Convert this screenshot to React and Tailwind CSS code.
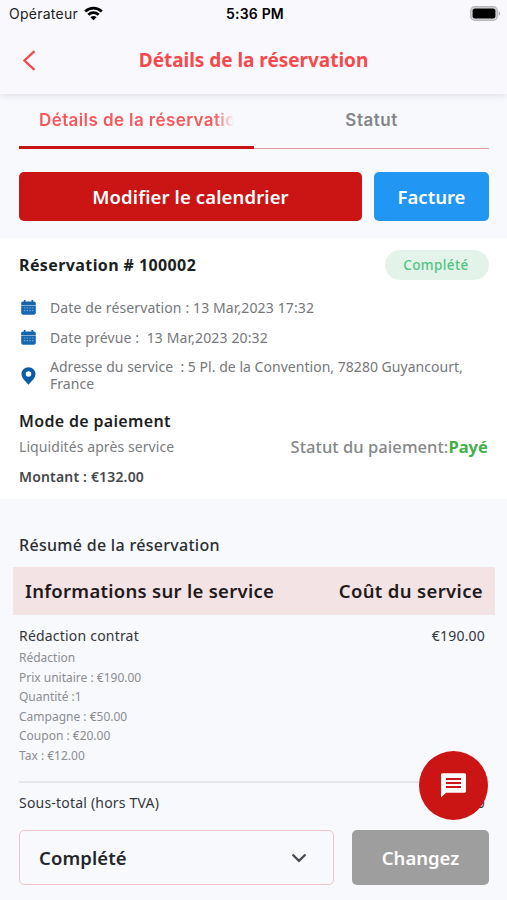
import React from "react";

const details = [
  "Rédaction",
  "Prix unitaire : €190.00",
  "Quantité :1",
  "Campagne : €50.00",
  "Coupon : €20.00",
  "Tax : €12.00",
];

function WifiIcon() {
  return (
    <svg width="19" height="15" viewBox="0 0 19 15" fill="none" stroke="#000" strokeWidth="2.7">
      <path d="M1.2 5.4C6 .9 13 .9 17.8 5.4" />
      <path d="M4.3 8.8c3-2.8 7.400-2.8 10.400 0" />
      <path d="M9.5 14.2 6.4 11.3c1.700-1.600 4.500-1.600 6.200 0z" fill="#000" stroke="none" />
    </svg>
  );
}

function BatteryIcon() {
  return (
    <svg width="31" height="15" viewBox="0 0 31 15">
      <rect x="0.8" y="0.8" width="26.4" height="13.4" rx="3.8" fill="#dcdcde" stroke="#b8b8ba" strokeWidth="1.4" />
      <rect x="2.6" y="2.6" width="22.8" height="9.8" rx="2" fill="#000" />
      <path d="M28.6 5.2c2 .8 2 3.8 0 4.6z" fill="#aaa" />
    </svg>
  );
}

function CalendarIcon() {
  return (
    <svg width="15" height="15" viewBox="0 0 15 15" className="shrink-0">
      <path d="M2 1.4h11c1 0 1.800.8 1.800 1.800v1.700H.2V3.200c0-1 .8-1.800 1.800-1.800z" fill="#1565ab" />
      <path d="M3.700 0v2.400M11.300 0v2.400" stroke="#1565ab" strokeWidth="1.7" />
      <path d="M.2 5.500h14.600v7.300c0 1.100-.8 1.900-1.800 1.900H2c-1 0-1.800-.8-1.800-1.900z" fill="#1767b0" />
      <path d="M2.800 8h9.800M2.800 10.600h9.800" stroke="#6fa5d6" strokeWidth="1.2" strokeDasharray="1.5 1.2" />
    </svg>
  );
}

function PinIcon() {
  return (
    <svg width="15" height="18" viewBox="0 0 15 18" className="mt-[2px] shrink-0">
      <path
        fillRule="evenodd"
        d="M7.5.3C3.500.3.5 3.300.5 7c0 4.200 4.300 7.700 7 10.700 2.700-3 7-6.500 7-10.700C14.500 3.300 11.500.3 7.500.3zM7.500 4.200a2.800 2.800 0 1 1 0 5.600 2.800 2.800 0 0 1 0-5.600z"
        fill="#0a5ba8"
      />
    </svg>
  );
}

function MessageIcon() {
  return (
    <svg width="25" height="25" viewBox="0 0 25 25">
      <path d="M1.500.3h22c.8 0 1.500.7 1.500 1.500v16.400c0 .8-.7 1.500-1.500 1.500H5L0 24.500V1.800C0 1 .7.3 1.500.3z" fill="#fff" />
      <path d="M5 6h15M5 10h15M5 14h15" stroke="#ca1514" strokeWidth="2" />
    </svg>
  );
}

function Header() {
  return (
    <div className="relative h-[94px] bg-[#f9f9fd] shadow-[0_2px_6px_rgba(60,60,80,0.12)]">
      <div className="grid h-7 grid-cols-3 items-center pr-[6px] pl-[9px] font-['Inter','Liberation_Sans',sans-serif] text-[14px] text-[#222]">
        <div className="flex items-center gap-[6px] pb-[2px]">
          <span className="tracking-[0.25px]">Opérateur</span>
          <WifiIcon />
        </div>
        <span className="pb-[1px] text-center font-semibold tracking-[0.2px] text-black">5:36 PM</span>
        <div className="flex justify-end pb-[2px]">
          <BatteryIcon />
        </div>
      </div>
      <div className="grid h-[64px] grid-cols-[60px_1fr_60px] items-center">
        <svg width="13" height="21" viewBox="0 0 13 21" className="ml-[23px]" fill="none" stroke="#f04c50" strokeWidth="2.3">
          <path d="M11.5 1.200 1.500 10.500l10 9.300" />
        </svg>
        <h1 className="text-center text-[19px] font-bold tracking-[-0.03px] text-[#f7484c]">Détails de la réservation</h1>
      </div>
    </div>
  );
}

function Tabs() {
  return (
    <div className="flex h-[55px] pr-[18px] pl-[19px] font-['Inter','Liberation_Sans',sans-serif] text-[17px] leading-6 font-semibold">
      <div className="w-[235px] border-b-[3px] border-[#c81414] px-5 pt-[14px]">
        <div className="overflow-hidden whitespace-nowrap tracking-[0.4px] text-[#f7585b] [mask-image:linear-gradient(to_right,black_90%,transparent)]">
          Détails de la réservation
        </div>
      </div>
      <div className="flex-1 border-b border-[#e29a9d] pt-[14px] text-center tracking-[0.5px] text-[#85858a]">Statut</div>
    </div>
  );
}

function BookingInfo() {
  return (
    <div className="mt-[17px] h-[261px] bg-white pt-3 pr-[18px] pl-[19px]">
      <div className="flex h-[30px] items-center justify-between">
        <h2 className="text-[16px] font-bold tracking-[0.4px] text-[#1c1f22]">Réservation # 100002</h2>
        <span className="flex h-[30px] w-[104px] items-center justify-center rounded-full bg-[#e4f3ea] pr-[2px] text-[13.5px] font-medium tracking-[0.4px] text-[#4fc47f]">
          Complété
        </span>
      </div>
      <div className="mt-3 text-[14px] whitespace-pre text-[#75777a]">
        <div className="flex h-[30px] items-center gap-[14px] pl-[2px]">
          <CalendarIcon />
          <span className="tracking-[0.12px]">Date de réservation : 13 Mar,2023 17:32</span>
        </div>
        <div className="flex h-[31px] items-center gap-[14px] pl-[2px]">
          <CalendarIcon />
          <span className="tracking-[0.13px]">Date prévue :  13 Mar,2023 20:32</span>
        </div>
        <div className="mt-[5px] flex items-center gap-[14px] pl-[2px]">
          <PinIcon />
          <span className="leading-[17px] tracking-[0.03px]">
            {"Adresse du service  : 5 Pl. de la Convention, 78280 Guyancourt,\nFrance"}
          </span>
        </div>
      </div>
      <h2 className="mt-[15px] text-[16px] leading-7 font-semibold tracking-[0.33px] text-[#1c1f22]">Mode de paiement</h2>
      <div className="flex h-6 items-center justify-between">
        <span className="pb-[2px] text-[14px] tracking-[0.08px] text-[#7b7d80]">Liquidités après service</span>
        <span className="pr-[1px] text-[16.5px] font-medium tracking-[0.05px] text-[#858789]">
          Statut du paiement:<span className="font-bold text-[#42b045]">Payé</span>
        </span>
      </div>
      <div className="mt-[6px] text-[14px] leading-6 font-semibold tracking-[0.17px] text-[#45484b]">Montant : €132.00</div>
    </div>
  );
}

function Summary() {
  return (
    <div className="pt-8">
      <h2 className="px-[19px] text-[16px] leading-7 font-medium tracking-[0.3px] text-[#2b2e31]">Résumé de la réservation</h2>
      <div className="mt-2 mr-[12px] ml-[13px] flex h-12 items-center justify-between bg-[#f4e3e5] px-3 text-[18.5px] font-semibold tracking-[0.28px] text-[#1f1a1c]">
        <span>Informations sur le service</span>
        <span className="tracking-[0.35px]">Coût du service</span>
      </div>
      <div className="mt-[11px] flex justify-between pr-[22px] pl-[19px] text-[14px] leading-5 tracking-[0.2px] text-[#333639]">
        <span>Rédaction contrat</span>
        <span>€190.00</span>
      </div>
      <div className="mt-[2px] px-[19px] text-[12px] leading-[19.5px] text-[#8b8d91]">
        {details.map((item) => (
          <div key={item}>{item}</div>
        ))}
      </div>
      <div className="mt-4 mr-[18px] ml-[19px] h-[2px] bg-[#e5e6ea]" />
      <div className="mt-[10px] flex justify-between pr-[22px] pl-[19px] text-[14px] leading-5 tracking-[0.2px] text-[#333639]">
        <span>Sous-total (hors TVA)</span>
        <span>€132.00</span>
      </div>
    </div>
  );
}

function App() {
  return (
    <div className="relative h-[900px] w-[507px] overflow-hidden bg-[#f8f9fd] font-['Noto_Sans','Open_Sans',sans-serif]">
      <Header />
      <Tabs />
      <div className="mt-[23px] flex h-[49px] gap-3 pr-[18px] pl-[19px] text-[18.5px] font-semibold text-white">
        <button className="flex-1 rounded-[5px] bg-[#ca1514] tracking-[0.13px]">Modifier le calendrier</button>
        <button className="w-[115px] rounded-[5px] bg-[#2196f3]">Facture</button>
      </div>
      <BookingInfo />
      <Summary />
      <div className="mt-[17px] flex h-[55px] gap-[18px] pr-[18px] pl-[19px] text-[18.5px] font-semibold">
        <div className="flex flex-1 items-center justify-between rounded-[5px] border-[1.5px] border-[#efc3c8] pr-[26px] pl-[19px] text-[#24272a]">
          <span className="tracking-[0.1px]">Complété</span>
          <svg width="16" height="10" viewBox="0 0 16 10" fill="none" stroke="#4a4d50" strokeWidth="2.3">
            <path d="m1.500 1.500 6.500 6.300 6.500-6.300" />
          </svg>
        </div>
        <button className="w-[137px] rounded-[5px] bg-[#9e9e9e] text-white">Changez</button>
      </div>
      <button className="absolute top-[751px] left-[419px] flex h-[69px] w-[69px] items-center justify-center rounded-full bg-[#ca1514] pr-px">
        <MessageIcon />
      </button>
    </div>
  );
}

export default App;
